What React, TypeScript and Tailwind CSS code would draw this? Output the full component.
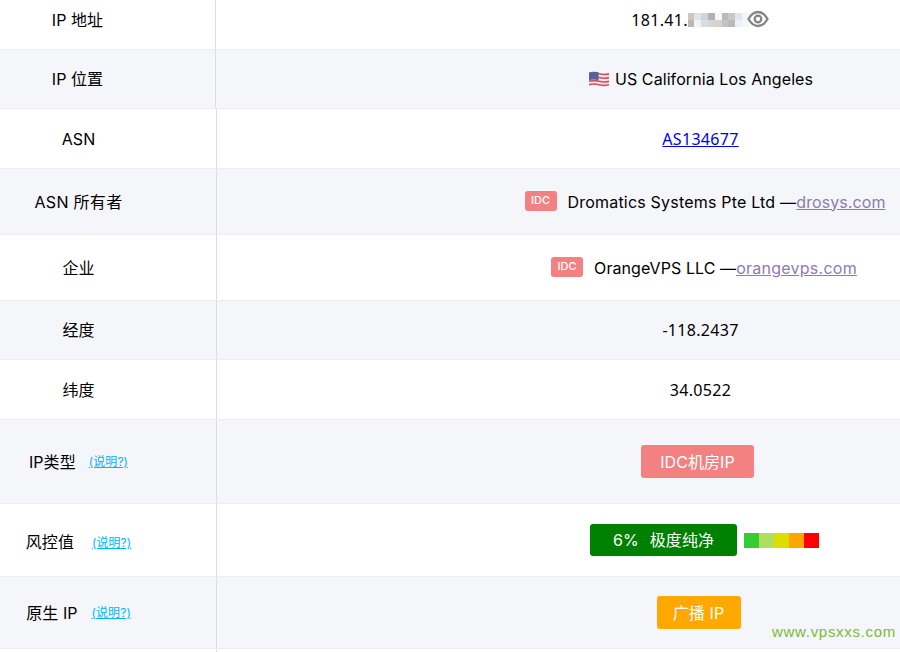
import React from 'react';

const font = "font-['Inter','Noto_Sans_CJK_SC',sans-serif]";
const digits = "font-['Noto_Sans',sans-serif] tracking-[0.3px]";

function Row({ h, alt, divider = 'w-[217px]', label, children }: { h: string; alt?: boolean; divider?: string; label: React.ReactNode; children: React.ReactNode }) {
  return (
    <div className={`flex border-b border-[#ebedf0] ${h} ${alt ? 'bg-[#f5f6fa]' : 'bg-white'}`}>
      <div className={`flex shrink-0 items-center border-r border-[#dcdde1] ${divider}`}>
        <div className="flex w-[157px] items-center justify-center">{label}</div>
      </div>
      <div className="flex flex-1 items-center justify-center pl-[284px]">{children}</div>
    </div>
  );
}

function Help({ className }: { className: string }) {
  return <a className={`text-[12px] text-[#00b4ff] underline ${className}`}>(说明?)</a>;
}

function IdcTag({ className }: { className: string }) {
  return <span className={`mb-[2px] mr-[11px] flex h-[20px] w-[32px] items-center justify-center rounded-[3px] bg-[#f38181] text-[11px] font-medium text-white ${className}`}>IDC</span>;
}

const mosaicTop = ['#cdc5bf', '#dfe2e6', '#d0d4de', '#aeb0b3', '#fbf8f4', '#b4bcc0', '#cfc6bf', '#dde6ef', '#f3f5f8'];
const mosaicBottom = ['#b8b8b6', '#f4f4ee', '#dadbe6', '#d9d5d0', '#d6d2cc', '#bcc6c8', '#b8baba', '#eef2f6', '#f4f6f9'];

function Mosaic() {
  return (
    <span className="grid h-[14px] w-[61px] grid-cols-9 grid-rows-2">
      {[...mosaicTop, ...mosaicBottom].map((c, i) => (
        <span key={i} style={{ backgroundColor: c }} />
      ))}
    </span>
  );
}

function EyeIcon() {
  return (
    <svg width="22" height="18" viewBox="0 0 22 18" fill="none" stroke="#858585" strokeWidth="2.300" className="mb-[2px] ml-[-2px]">
      <path d="M1.500 9C4 4.500 7.200 2 11 2s7 2.500 9.500 7c-2.500 4.500-5.700 7-9.500 7S4 13.500 1.500 9Z" />
      <circle cx="11" cy="9" r="3.300" />
    </svg>
  );
}

function FlagUS() {
  return (
    <svg width="20" height="16" viewBox="0 0 21 17" preserveAspectRatio="none" className="ml-[2px] mr-[6px]">
      <path d="M0 1.500Q5 0 10.500 1.500T21 1.500V15.500Q15.500 17 10.500 15.500T0 15.500Z" fill="#eee6ea" />
      <path d="M0 3Q5 1.500 10.500 3T21 3M0 7Q5 5.500 10.500 7T21 7M0 11Q5 9.500 10.500 11T21 11M0 14.500Q5 13 10.500 14.500T21 14.500" fill="none" stroke="#d4505f" strokeWidth="1.700" />
      <path d="M0 1.500Q5 0 10 1.400V9.800Q5 8.400 0 9.800Z" fill="#56609c" />
    </svg>
  );
}

export default function App() {
  return (
    <div className={`relative flex h-[652px] w-[900px] flex-col overflow-hidden bg-white text-[16px] tracking-[0.08px] text-black ${font}`}>
      <Row
        h="h-[50px]"
        divider="w-[216px]"
        label={<span className="mb-[10px] mr-[2px]">IP 地址</span>}
      >
        <span className="mb-[10px] flex items-center">
          <span className={digits}>181.41.</span>
          <Mosaic />
          <EyeIcon />
        </span>
      </Row>
      <Row h="h-[59px]" alt divider="w-[216px]" label={<span className="mr-[2px]">IP 位置</span>}>
        <FlagUS />
        <span>US California Los Angeles</span>
      </Row>
      <Row h="h-[60px]" label="ASN">
        <a className={`text-[#0000ee] underline ${digits}`}>AS134677</a>
      </Row>
      <Row h="h-[66px]" alt label={<span className="tracking-[0.3px]">ASN 所有者</span>}>
        <IdcTag className="ml-[9px]" />
        <span className="tracking-[0.2px]">Dromatics Systems Pte Ltd —</span>
        <a className="text-[#8c7cb0] underline">drosys.com</a>
      </Row>
      <Row h="h-[66px]" label="企业">
        <IdcTag className="ml-[7px]" />
        <span>OrangeVPS LLC —</span>
        <a className="tracking-[0.25px] text-[#8c7cb0] underline">orangevps.com</a>
      </Row>
      <Row h="h-[59px]" alt label="经度">
        <span className={digits}>-118.2437</span>
      </Row>
      <Row h="h-[60px]" label="纬度">
        <span className={digits}>34.0522</span>
      </Row>
      <Row
        h="h-[84px]"
        alt
        label={
          <>
            <span>IP类型</span>
            <Help className="ml-[13px]" />
          </>
        }
      >
        <span className="mr-[6px] flex h-[33px] w-[113px] items-center justify-center rounded-[3px] bg-[#f38181] text-white">IDC机房IP</span>
      </Row>
      <Row
        h="h-[73px]"
        label={
          <>
            <span className="mt-[4px]">风控值</span>
            <Help className="ml-[18px] mt-[6px]" />
          </>
        }
      >
        <span className="ml-[8px] flex h-[32px] w-[147px] items-center justify-center gap-[11px] rounded-[3px] bg-[#008000] text-white">
          <span>6%</span>
          <span>极度纯净</span>
        </span>
        <span className="ml-[7px] flex h-[15px]">
          <span className="w-[15px] bg-[#32cd32]" />
          <span className="w-[15px] bg-[#b0de5f]" />
          <span className="w-[15px] bg-[#dddd00]" />
          <span className="w-[15px] bg-[#ffa500]" />
          <span className="w-[15px] bg-[#ff0000]" />
        </span>
      </Row>
      <Row
        h="h-[72px]"
        alt
        label={
          <>
            <span>原生 IP</span>
            <Help className="ml-[14px]" />
          </>
        }
      >
        <span className="mr-[4px] flex h-[33px] w-[84px] items-center justify-center rounded-[3px] bg-[#ffa800] text-white">广播 IP</span>
      </Row>
      <div className="w-[217px] flex-1 border-r border-[#dcdde1]" />
      <span className="absolute right-[4px] top-[621px] font-['Liberation_Sans',sans-serif] text-[15px] tracking-[0.7px] text-[#7cb93a]">www.vpsxxs.com</span>
    </div>
  );
}
